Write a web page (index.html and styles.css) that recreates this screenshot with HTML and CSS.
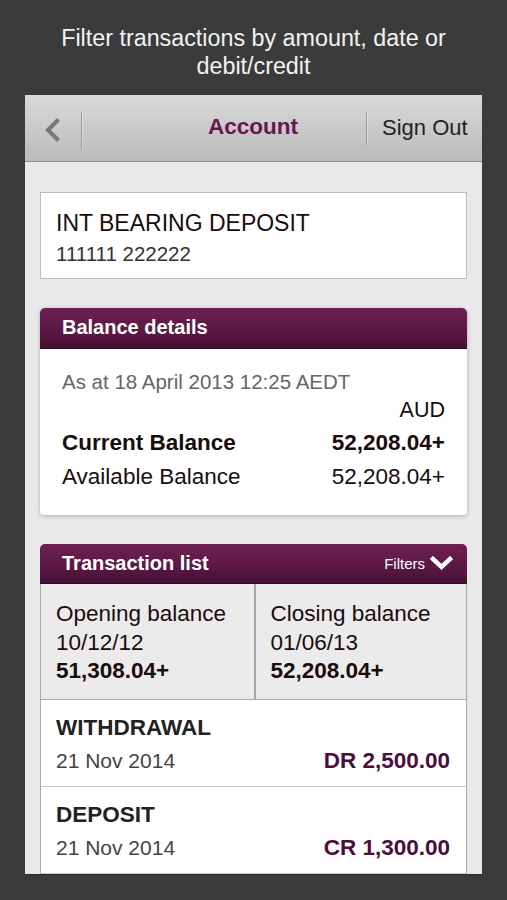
FILE: index.html
```html
<!DOCTYPE html>
<html>
<head>
<meta charset="utf-8">
<link rel="stylesheet" href="styles.css">
</head>
<body>
<div class="caption">Filter transactions by amount, date or<br>debit/credit</div>
<div class="screen">
  <div class="topbar">
    <div class="back">
      <svg width="18" height="24" viewBox="0 0 18 24"><path d="M14 3 L5 12 L14 21" fill="none" stroke="#777" stroke-width="4.2" stroke-linecap="square" stroke-linejoin="miter"/></svg>
    </div>
    <div class="divider"></div>
    <div class="title">Account</div>
    <div class="divider short"></div>
    <div class="signout">Sign Out</div>
  </div>
  <div class="content">
    <div class="acct">
      <div class="acct-name">INT BEARING DEPOSIT</div>
      <div class="acct-num">111111 222222</div>
    </div>

    <div class="panel balance">
      <div class="panel-head">Balance details</div>
      <div class="balance-body">
        <div class="asat">As at 18 April 2013 12:25 AEDT</div>
        <div class="aud">AUD</div>
        <div class="bal-row current"><span>Current Balance</span><span>52,208.04+</span></div>
        <div class="bal-row avail"><span>Available Balance</span><span>52,208.04+</span></div>
      </div>
    </div>

    <div class="panel txn">
      <div class="panel-head">
        <span>Transaction list</span>
        <span class="filters">Filters
          <svg width="23" height="15" viewBox="0 0 23 15"><path d="M3 3 L11.5 11 L20 3" fill="none" stroke="#fff" stroke-width="4.5" stroke-linecap="square" stroke-linejoin="miter"/></svg>
        </span>
      </div>
      <div class="ocbal">
        <div class="oc">
          <div>Opening balance</div>
          <div>10/12/12</div>
          <div class="b">51,308.04+</div>
        </div>
        <div class="oc right">
          <div>Closing balance</div>
          <div>01/06/13</div>
          <div class="b">52,208.04+</div>
        </div>
      </div>
      <div class="trow">
        <div class="ttype">WITHDRAWAL</div>
        <div class="tline"><span class="tdate">21 Nov 2014</span><span class="tamt">DR 2,500.00</span></div>
      </div>
      <div class="trow">
        <div class="ttype">DEPOSIT</div>
        <div class="tline"><span class="tdate">21 Nov 2014</span><span class="tamt">CR 1,300.00</span></div>
      </div>
    </div>
  </div>
</div>
</body>
</html>
```

FILE: styles.css
```css
* { box-sizing: border-box; }
html, body { margin: 0; padding: 0; }
body {
  background: #3b3b3b;
  font-family: "Liberation Sans", Arial, sans-serif;
  width: 507px;
  height: 900px;
  overflow: hidden;
}
.caption {
  padding-top: 24px;
  color: #f2f2f2;
  font-size: 23.3px;
  line-height: 28px;
  text-align: center;
  height: 95px;
}
.screen {
  margin: 0 25px 0 25px;
  width: 457px;
  height: 780px;
  overflow: hidden;
  background: #e9e9e9;
  border-bottom: 1px solid #2a2a2a;
}
.topbar {
  height: 67px;
  background: linear-gradient(#d9d9d9, #bbbbbb);
  border-bottom: 1px solid #8c8c8c;
  display: flex;
  align-items: center;
}
.back {
  width: 56px;
  display: flex;
  justify-content: center;
  padding-right: 3px;
  padding-top: 4px;
}
.divider {
  width: 1px;
  height: 37px;
  background: #9a9a9a;
  box-shadow: 1px 0 0 rgba(255,255,255,0.35);
  margin-top: 4px;
}
.divider.short { height: 33px; margin-top: 0; }
.title {
  flex: 1;
  text-align: center;
  color: #6b1550;
  font-weight: bold;
  font-size: 22.5px;
  margin-top: -3px;
  padding-left: 58px;
}
.signout {
  width: 115px;
  padding-left: 15px;
  font-size: 22px;
  color: #222;
  margin-top: 0px;
}
.content {
  padding: 30px 15px 0;
}
.acct {
  background: #fff;
  border: 1px solid #bdbdbd;
  padding: 16px 15px 11px;
  height: 87px;
}
.acct-name {
  font-size: 23px;
  line-height: 28px;
  color: #1a0c0c;
}
.acct-num {
  font-size: 20.5px;
  line-height: 26px;
  margin-top: 4px;
  color: #333;
}
.panel {
  margin-top: 29px;
  border-radius: 5px 5px 4px 4px;
  box-shadow: 0 1px 4px rgba(0,0,0,0.25);
  background: #fff;
}
.panel-head {
  height: 41px;
  border-radius: 5px 5px 0 0;
  background: linear-gradient(#6e2053, #5a1843 60%, #451132);
  border-bottom: 1px solid #2e0a22;
  color: #fff;
  font-weight: bold;
  font-size: 20px;
  line-height: 39px;
  padding: 0 14px 0 22px;
  display: flex;
  justify-content: space-between;
}
.balance-body {
  padding: 20px 22px 22px;
}
.asat {
  font-size: 20.5px;
  line-height: 26px;
  color: #666;
}
.aud {
  font-size: 21.5px;
  line-height: 30px;
  text-align: right;
  color: #1a0c0c;
}
.bal-row {
  display: flex;
  justify-content: space-between;
  font-size: 22.5px;
  color: #1a0c0c;
}
.bal-row.current { font-weight: bold; line-height: 36px; }
.bal-row.avail { line-height: 32px; }

.panel.txn {
  border-radius: 5px 5px 0 0;
  box-shadow: none;
  background: transparent;
}
.txn .panel-head {
  height: 40px;
  line-height: 38px;
}
.filters {
  font-weight: normal;
  font-size: 15px;
  display: flex;
  align-items: center;
  gap: 5px;
}
.ocbal {
  display: grid;
  grid-template-columns: 1fr 1fr;
  background: #ebebeb;
  border: 1px solid #a8a8a8;
  border-top: none;
  height: 116px;
}
.oc {
  padding: 16px 15px 0;
  font-size: 22.5px;
  line-height: 28.5px;
  color: #1a0c0c;
}
.oc.right {
  border-left: 2px solid #a3a3a3;
}
.oc .b { font-weight: bold; }
.trow {
  background: #fff;
  border: 1px solid #a8a8a8;
  border-top: none;
  border-bottom: 1px solid #c8c8c8;
  height: 87px;
  padding: 13px 16px 0 15px;
}
.ttype {
  font-size: 22.5px;
  font-weight: bold;
  line-height: 30px;
  color: #222;
}
.tline {
  display: flex;
  justify-content: space-between;
  align-items: baseline;
  line-height: 32px;
  margin-top: 2px;
}
.tdate {
  font-size: 21px;
  color: #444;
}
.tamt {
  font-size: 22.5px;
  font-weight: bold;
  color: #4d0c3d;
}
```
